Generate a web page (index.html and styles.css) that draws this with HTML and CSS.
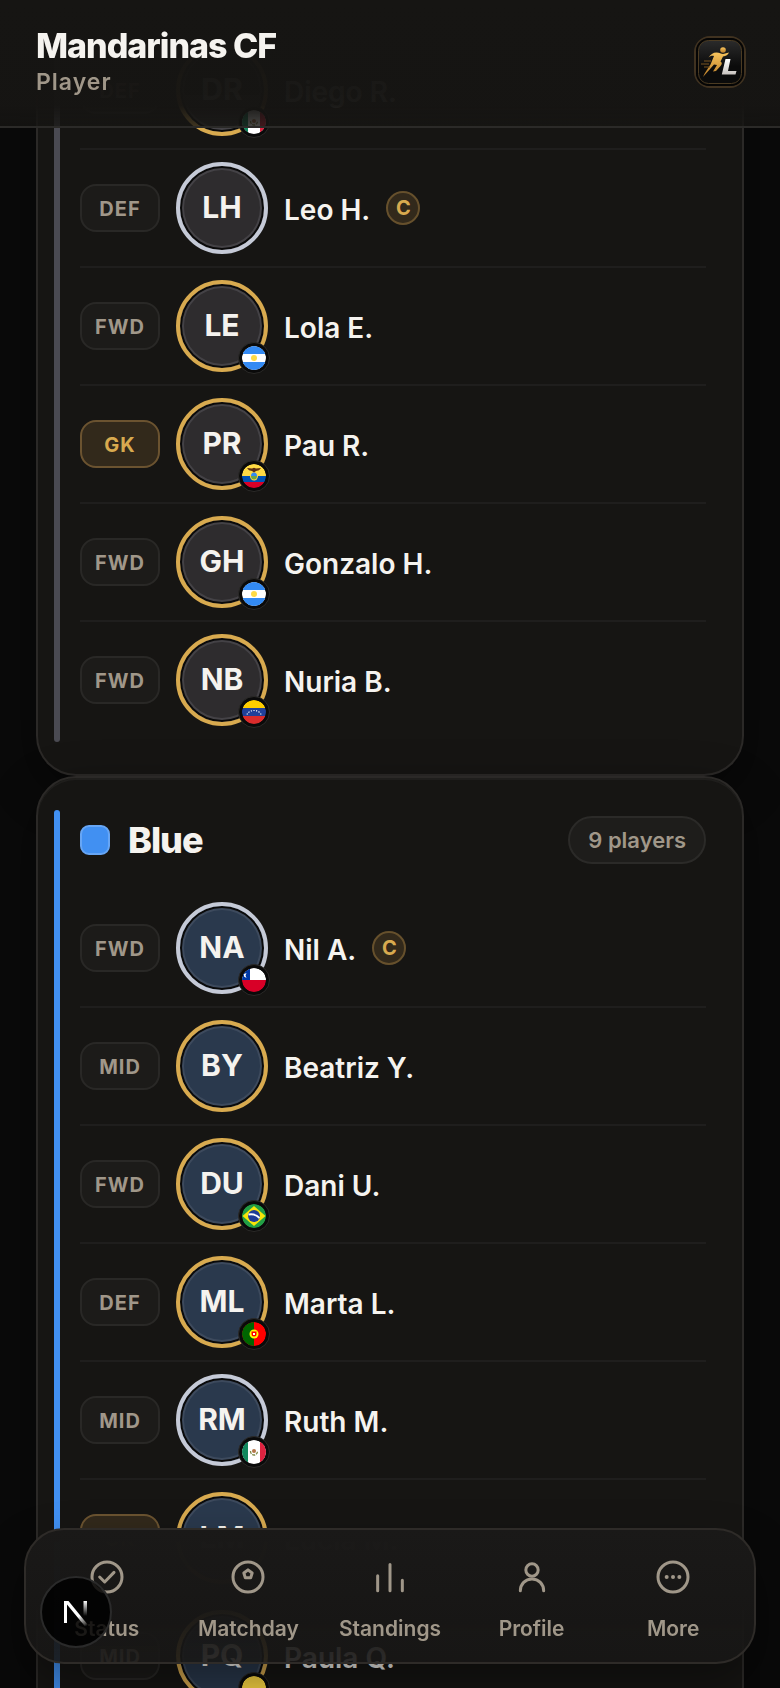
FILE: index.html
```html
<!DOCTYPE html>
<html lang="en">
<head>
<meta charset="utf-8">
<meta name="viewport" content="width=device-width, initial-scale=1">
<title>Mandarinas CF</title>
<link rel="stylesheet" href="styles.css">
</head>
<body>

<svg class="sprite" aria-hidden="true">
    <symbol id="flag-mx" viewBox="0 0 24 24">
        <path fill="#fff" d="M0 0h24v24H0z"/>
        <path fill="#11875d" d="M0 0h6v24H0z"/>
        <path fill="#de2340" d="M18 0h6v24h-6z"/>
        <circle cx="12" cy="11" r="2" fill="#b5764a"/>
        <path d="M8.500 11c0 2.500 1.500 4 3.500 4s3.500-1.500 3.500-4" fill="none" stroke="#7d8a45" stroke-width="1.300" stroke-dasharray="3 1"/>
    </symbol>
    <symbol id="flag-ar" viewBox="0 0 24 24">
        <path fill="#fff" d="M0 0h24v24H0z"/>
        <path fill="#338af3" d="M0 0h24v8H0zM0 16h24v8H0z"/>
        <circle cx="12" cy="12" r="3" fill="#ffda44"/>
    </symbol>
    <symbol id="flag-ec" viewBox="0 0 24 24">
        <path fill="#ffda44" d="M0 0h24v12H0z"/>
        <path fill="#0052b4" d="M0 12h24v6H0z"/>
        <path fill="#d80027" d="M0 18h24v6H0z"/>
        <ellipse cx="12" cy="12" rx="4" ry="4.500" fill="#ffda44"/>
        <path fill="#338af3" d="M9 12a3 3.500 0 0 1 6 0z"/>
        <path fill="#6da544" d="M9 12h6a3 3.500 0 0 1-6 0z"/>
        <path fill="#5c2d12" d="M5 4l5 .5 2-.8 2 .8 5-.5-2 2.200-3 .8L12 8.500 10 7l-3-.8z"/>
    </symbol>
    <symbol id="flag-ve" viewBox="0 0 24 24">
        <path fill="#ffcd00" d="M0 0h24v8H0z"/>
        <path fill="#21409a" d="M0 8h24v8H0z"/>
        <path fill="#da2c2c" d="M0 16h24v8H0z"/>
        <path d="M5 14.500a7.300 5.500 0 0 1 14.200.5" fill="none" stroke="#fff" stroke-width="1.200" stroke-dasharray="1.200 1.400"/>
    </symbol>
    <symbol id="flag-cl" viewBox="0 0 24 24">
        <path fill="#fff" d="M0 0h24v12H0z"/>
        <path fill="#d80027" d="M0 12h24v12H0z"/>
        <path fill="#0039a6" d="M0 0h8v12H0z"/>
        <path fill="#fff" d="M4.500 5L2 6v2.500L4.500 10 3.500 7.500z"/>
    </symbol>
    <symbol id="flag-br" viewBox="0 0 24 24">
        <path fill="#229e45" d="M0 0h24v24H0z"/>
        <path fill="#f8e509" d="M12 2l11.500 10L12 22 .5 12z"/>
        <circle cx="12" cy="12" r="6" fill="#1f3d96"/>
        <path d="M6.500 10.500c4-.8 8 .4 11 3.500" fill="none" stroke="#fff" stroke-width="1.800"/>
    </symbol>
    <symbol id="flag-pt" viewBox="0 0 24 24">
        <path fill="#f00" d="M0 0h24v24H0z"/>
        <path fill="#060" d="M0 0h12v24H0z"/>
        <circle cx="12" cy="12" r="4.500" fill="#ff0"/>
        <path fill="#f00" d="M9.500 9.500h5V12a2.500 2.500 0 0 1-5 0z"/>
        <path fill="#fff" d="M11 11h2v2h-2z"/>
    </symbol>
    <symbol id="flag-co" viewBox="0 0 24 24">
        <path fill="#ffda44" d="M0 0h24v12H0z"/>
        <path fill="#0052b4" d="M0 12h24v6H0z"/>
        <path fill="#d80027" d="M0 18h24v6H0z"/>
    </symbol>
</svg>

<header class="topbar">
    <div>
        <h1 class="topbar-title">Mandarinas CF</h1>
        <p class="topbar-role">Player</p>
    </div>
    <a class="brand" href="#" aria-label="Home">
        <svg viewBox="0 0 48 48" aria-hidden="true">
            <defs>
                <linearGradient id="tile" x1="0" y1="0" x2="0" y2="1">
                    <stop offset="0" stop-color="#2b2b2b"/>
                    <stop offset=".6" stop-color="#0b0b0b"/>
                </linearGradient>
                <linearGradient id="runner" x1="0" y1="0" x2="0" y2="1">
                    <stop offset="0" stop-color="#f8c45c"/>
                    <stop offset="1" stop-color="#b97b26"/>
                </linearGradient>
                <linearGradient id="letter" x1="0" y1="0" x2="0" y2="1">
                    <stop offset="0" stop-color="#fff"/>
                    <stop offset="1" stop-color="#c9c4c0"/>
                </linearGradient>
            </defs>
            <rect width="48" height="48" rx="13" fill="#050505"/>
            <rect x="2.500" y="2.500" width="43" height="43" rx="10" fill="url(#tile)" stroke="#4b3b22"/>
            <circle cx="27" cy="12" r="2.800" fill="url(#runner)"/>
            <path fill="url(#runner)" d="M12.500 19.500c2-3 4.500-5 8-5 3 0 4.500 1.500 6.500 1.500l6-1.500c-1 2.300-3 3.500-6 4l-2.500 5c2 1 1.500 3 0 4.500L20 33l-3 .5 4-6.500-3-.5L7 39c2-5 5-8.500 7.500-12.500L18 18c-2-.5-4 0-5.500 1.500z"/>
            <path d="M8 23h7M5 26h8M8 29h6" stroke="#7a5420" stroke-width="1"/>
            <path fill="url(#letter)" d="M29.500 21h5L32 33h8.500l-1 3.500H25.800z"/>
        </svg>
    </a>
</header>

<main class="roster">

    <section class="card card-continued team-black">
        <span class="stripe"></span>
        <div class="card-body">
            <ul class="players">
                <li class="player">
                    <span class="position">DEF</span>
                    <span class="avatar">DR<svg class="flag"><use href="#flag-mx"/></svg></span>
                    <span class="name">Diego R.</span>
                </li>
                <li class="player">
                    <span class="position">DEF</span>
                    <span class="avatar silver">LH</span>
                    <span class="name">Leo H.</span>
                    <span class="captain" title="Captain">C</span>
                </li>
                <li class="player">
                    <span class="position">FWD</span>
                    <span class="avatar">LE<svg class="flag"><use href="#flag-ar"/></svg></span>
                    <span class="name">Lola E.</span>
                </li>
                <li class="player">
                    <span class="position keeper">GK</span>
                    <span class="avatar">PR<svg class="flag"><use href="#flag-ec"/></svg></span>
                    <span class="name">Pau R.</span>
                </li>
                <li class="player">
                    <span class="position">FWD</span>
                    <span class="avatar">GH<svg class="flag"><use href="#flag-ar"/></svg></span>
                    <span class="name">Gonzalo H.</span>
                </li>
                <li class="player">
                    <span class="position">FWD</span>
                    <span class="avatar">NB<svg class="flag"><use href="#flag-ve"/></svg></span>
                    <span class="name">Nuria B.</span>
                </li>
            </ul>
        </div>
    </section>

    <section class="card team-blue">
        <span class="stripe"></span>
        <div class="card-body">
            <div class="team-head">
                <span class="swatch"></span>
                <h2 class="team-name">Blue</h2>
                <span class="count">9 players</span>
            </div>
            <ul class="players">
                <li class="player">
                    <span class="position">FWD</span>
                    <span class="avatar silver">NA<svg class="flag"><use href="#flag-cl"/></svg></span>
                    <span class="name">Nil A.</span>
                    <span class="captain" title="Captain">C</span>
                </li>
                <li class="player">
                    <span class="position">MID</span>
                    <span class="avatar">BY</span>
                    <span class="name">Beatriz Y.</span>
                </li>
                <li class="player">
                    <span class="position">FWD</span>
                    <span class="avatar">DU<svg class="flag"><use href="#flag-br"/></svg></span>
                    <span class="name">Dani U.</span>
                </li>
                <li class="player">
                    <span class="position">DEF</span>
                    <span class="avatar">ML<svg class="flag"><use href="#flag-pt"/></svg></span>
                    <span class="name">Marta L.</span>
                </li>
                <li class="player">
                    <span class="position">MID</span>
                    <span class="avatar silver">RM<svg class="flag"><use href="#flag-mx"/></svg></span>
                    <span class="name">Ruth M.</span>
                </li>
                <li class="player">
                    <span class="position keeper">GK</span>
                    <span class="avatar">LM</span>
                    <span class="name">Lucia M.</span>
                </li>
                <li class="player">
                    <span class="position">MID</span>
                    <span class="avatar">PQ<svg class="flag"><use href="#flag-co"/></svg></span>
                    <span class="name">Paula Q.</span>
                </li>
            </ul>
        </div>
    </section>

</main>

<nav class="tabs">
    <a class="tab" href="#status">
        <svg viewBox="0 0 24 24"><circle cx="12" cy="12" r="9"/><path d="M7.600 12l3 3 5.600-5.800"/></svg>
        Status
    </a>
    <a class="tab" href="#matchday">
        <svg viewBox="0 0 24 24"><circle cx="12" cy="12" r="9"/><path d="M12 7.700l2.500 1.900-.9 2.900h-3.200l-.9-2.900z"/></svg>
        Matchday
    </a>
    <a class="tab" href="#standings">
        <svg viewBox="0 0 24 24"><path d="M4.600 20.200v-9M12 20.200V4.500M19.400 20.200v-6.200"/></svg>
        Standings
    </a>
    <a class="tab" href="#profile">
        <svg viewBox="0 0 24 24"><circle cx="12" cy="7.800" r="3.700"/><path d="M5 20.300c0-4.100 3-7.100 7-7.100s7 3 7 7.100"/></svg>
        Profile
    </a>
    <a class="tab" href="#more">
        <svg viewBox="0 0 24 24"><circle cx="12" cy="12" r="9"/><path class="dots" d="M8.200 12h.01M12 12h.01M15.800 12h.01"/></svg>
        More
    </a>
</nav>

<button class="devtools" type="button" aria-label="Open dev tools">
    <svg viewBox="0 0 28 28" aria-hidden="true">
        <defs>
            <linearGradient id="diag" gradientUnits="userSpaceOnUse" x1="17" y1="18" x2="25" y2="28">
                <stop offset="0" stop-color="#fff"/>
                <stop offset="1" stop-color="#fff" stop-opacity="0"/>
            </linearGradient>
            <linearGradient id="stem" gradientUnits="userSpaceOnUse" x1="23" y1="3" x2="23" y2="18">
                <stop offset="0" stop-color="#fff"/>
                <stop offset="1" stop-color="#fff" stop-opacity="0"/>
            </linearGradient>
        </defs>
        <path fill="url(#diag)" d="M2 3h4.500L26 27l-2.500 2L5 6.500V25H2z"/>
        <path fill="url(#stem)" d="M21.500 3h3.500v15h-3.500z"/>
    </svg>
</button>

</body>
</html>
```
FILE: styles.css
```css
* {
    box-sizing: border-box;
}

body {
    margin: 0;
    height: 100vh;
    overflow: hidden;
    background: #0a0a0a;
    color: #f5f3ef;
    font-family: Inter, "Liberation Sans", sans-serif;
}

h1, h2, p, ul {
    margin: 0;
    padding: 0;
}

ul {
    list-style: none;
}

.sprite {
    position: absolute;
    width: 0;
    height: 0;
}

/* header */

.topbar {
    position: fixed;
    z-index: 10;
    top: 0;
    left: 0;
    right: 0;
    display: flex;
    align-items: center;
    justify-content: space-between;
    padding: 26px 34px 28px 36px;
    border-bottom: 2px solid #2b2a28;
    background: linear-gradient(rgba(22, 21, 19, 1), rgba(22, 21, 19, .98) 84%, rgba(22, 21, 19, .8));
}

.topbar-title {
    font-size: 34px;
    line-height: 40px;
    font-weight: 800;
    letter-spacing: -1px;
}

.topbar-role {
    font-size: 23px;
    line-height: 32px;
    font-weight: 600;
    letter-spacing: 1px;
    color: #a09789;
}

.brand {
    width: 52px;
    height: 52px;
    border: 2px solid #403220;
    border-radius: 16px;
}

.brand svg {
    display: block;
    width: 48px;
    height: 48px;
}

/* team cards */

.roster {
    height: 100%;
    overflow: hidden;
    padding: 0 36px;
}

.card {
    display: flex;
    gap: 20px;
    padding: 32px 36px 32px 16px;
    border: 2px solid #2b2927;
    border-radius: 40px;
    background: #161513;
    box-shadow: 0 16px 48px rgba(0, 0, 0, .4), inset 0 2px 0 #1f1e1c;
}

.card-continued {
    padding-top: 28px;
    border-top: 0;
    border-radius: 0 0 40px 40px;
}

.stripe {
    flex: none;
    width: 6px;
    border-radius: 3px;
}

.team-black .stripe {
    background: #4a4a52;
}

.team-blue .stripe {
    background: #4190f2;
}

.card-body {
    flex: 1;
    padding: 4px 0;
}

.team-head {
    display: flex;
    align-items: center;
    height: 52px;
    margin-bottom: 24px;
}

.swatch {
    width: 30px;
    height: 30px;
    margin-right: 18px;
    border: 2px solid #67a6f5;
    border-radius: 9px;
    background: #4190f2;
}

.team-name {
    flex: 1;
    font-size: 36px;
    line-height: 40px;
    font-weight: 800;
    letter-spacing: -1px;
}

.count {
    padding: 0 18px;
    border: 2px solid #2b2a28;
    border-radius: 24px;
    background: #1e1d1b;
    font-size: 22px;
    line-height: 44px;
    font-weight: 600;
    color: #a09789;
}

/* player rows */

.player {
    display: flex;
    align-items: center;
    gap: 16px;
    padding: 12px 0;
    border-bottom: 2px solid #1f1e1d;
}

.player:last-child {
    border-bottom: 0;
}

.position {
    width: 80px;
    height: 48px;
    border: 2px solid #292826;
    border-radius: 16px;
    background: #1c1b19;
    font-size: 20px;
    line-height: 46px;
    font-weight: 700;
    letter-spacing: 1px;
    text-align: center;
    color: #a09789;
}

.position.keeper {
    border-color: #6b5330;
    background: #32291b;
    color: #d8aa4f;
}

.avatar {
    position: relative;
    width: 92px;
    height: 92px;
    border: 4px solid #d8aa4f;
    border-radius: 50%;
    background: #2e2c2e;
    box-shadow: inset 0 0 0 2px #0a0a0a, inset 0 0 0 4px #444246;
    font-size: 30px;
    line-height: 82px;
    font-weight: 700;
    text-align: center;
}

.avatar.silver {
    border-color: #c5cad7;
}

.team-blue .avatar {
    background: #2a394d;
    box-shadow: inset 0 0 0 2px #0a0a0a, inset 0 0 0 4px #3d4a5d;
}

.flag {
    position: absolute;
    right: -6px;
    bottom: -6px;
    width: 32px;
    height: 32px;
    padding: 3px;
    border: 1px solid #2b2a28;
    border-radius: 50%;
    background: #0a0a0a;
}

.flag use {
    clip-path: circle(12px at 12px 12px);
}

.name {
    padding-top: 3px;
    font-size: 28px;
    line-height: 36px;
    font-weight: 600;
}

.captain {
    width: 34px;
    height: 34px;
    border: 2px solid #66502c;
    border-radius: 50%;
    background: #32291b;
    font-size: 20px;
    line-height: 30px;
    font-weight: 700;
    text-align: center;
    color: #d8aa4f;
}

/* bottom tabs */

.tabs {
    position: fixed;
    z-index: 10;
    left: 24px;
    right: 24px;
    bottom: 24px;
    display: flex;
    padding: 27px 10px 19px;
    border: 2px solid #2e2b28;
    border-radius: 40px;
    background: linear-gradient(rgb(26, 25, 24), rgba(24, 23, 22, .99) 55%, rgba(24, 23, 22, .91));
    box-shadow: 0 24px 48px rgba(0, 0, 0, .4);
}

.tab {
    flex: 1;
    display: flex;
    flex-direction: column;
    align-items: center;
    gap: 18px;
    font-size: 21px;
    line-height: 28px;
    font-weight: 600;
    text-decoration: none;
    color: #a09789;
}

.tab svg {
    width: 40px;
    height: 40px;
    fill: none;
    stroke: currentColor;
    stroke-width: 1.8;
    stroke-linecap: round;
    stroke-linejoin: round;
}

.tab .dots {
    stroke-width: 2.4;
}

.devtools {
    position: fixed;
    z-index: 20;
    left: 40px;
    bottom: 40px;
    display: flex;
    align-items: center;
    justify-content: center;
    width: 72px;
    height: 72px;
    padding: 0;
    border: 2px solid #2a2a2a;
    border-radius: 50%;
    background: rgba(0, 0, 0, .84);
}

.devtools svg {
    width: 28px;
    height: 28px;
}
```
